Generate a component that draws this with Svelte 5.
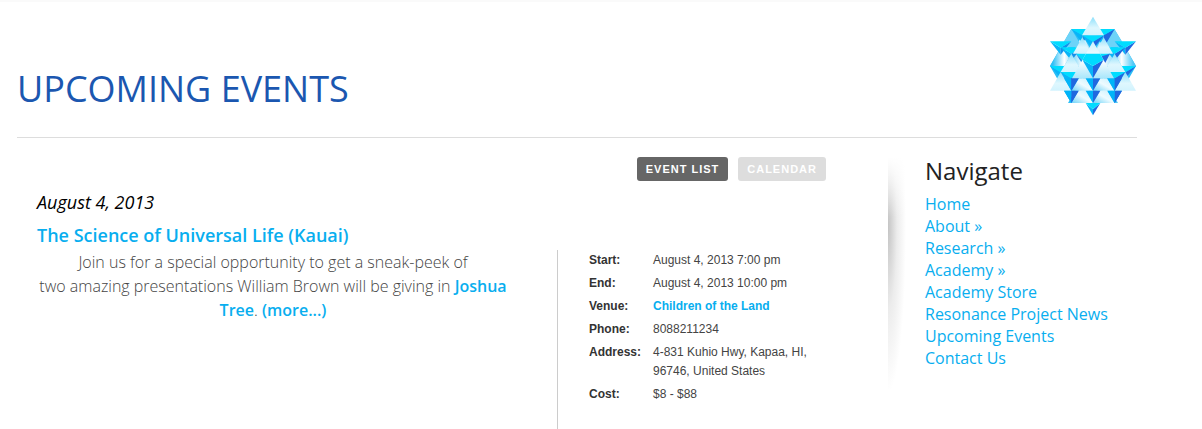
<script lang="ts">
  type Point = [number, number];

  const details = [
    { label: 'Start:', value: 'August 4, 2013 7:00 pm' },
    { label: 'End:', value: 'August 4, 2013 10:00 pm' },
    { label: 'Venue:', value: 'Children of the Land', href: '#venue' },
    { label: 'Phone:', value: '8088211234' },
    { label: 'Address:', value: '4-831 Kuhio Hwy, Kapaa, HI, 96746, United States' },
    { label: 'Cost:', value: '$8 - $88' },
  ];

  const links = [
    'Home',
    'About »',
    'Research »',
    'Academy »',
    'Academy Store',
    'Resonance Project News',
    'Upcoming Events',
    'Contact Us',
  ];

  let view = $state('list');

  // Downward tetrahedra: centre x, top y, half width, height
  const tetras = [
    [127, 63, 33, 42],
    [191, 63, 33, 56],
    [62, 100, 32, 40],
    [256, 100, 32, 40],
    [159, 82, 33, 42],
    [94, 118, 32, 40],
    [224, 118, 32, 40],
    [62, 174, 32, 37],
    [256, 174, 32, 37],
    [94, 192, 32, 56],
    [224, 192, 32, 56],
    [94, 248, 22, 37],
    [224, 248, 22, 37],
    [159, 285, 22, 37],
  ];

  // Upward faces: apex x, apex y, base y, half width
  const backFaces = [
    [73, 100, 174, 43],
    [245, 100, 174, 43],
    [127, 82, 174, 54],
    [191, 82, 174, 54],
    [127, 211, 285, 43],
    [191, 211, 285, 43],
  ];

  const frontFaces = [
    [159, 26, 82, 33],
    [127, 88, 137, 28],
    [191, 88, 137, 28],
    [94, 137, 192, 32],
    [224, 137, 192, 32],
    [62, 192, 248, 32],
    [256, 192, 248, 32],
  ];

  const join = (...p: Point[]) => p.map((q) => q.join(',')).join(' ');
  const up = ([x, top, base, w]: number[]) => join([x, top], [x + w, base], [x - w, base]);
</script>

{#snippet tetra(x: number, y: number, w: number, h: number)}
  <polygon points={join([x - w, y], [x, y + 19], [x, y + h])} fill="#08b4f8" />
  <polygon points={join([x + w, y], [x, y + 19], [x, y + h])} fill={x < 150 && y < 180 ? '#1590ea' : '#2068df'} />
  <polygon points={join([x - w, y], [x + w, y], [x, y + 19])} fill="#00dcff" />
{/snippet}

<div class="page">
  <header>
    <h1>UPCOMING EVENTS</h1>
    <svg class="logo" viewBox="28 24 262 300" aria-hidden="true">
      <defs>
        <linearGradient id="back" x1="0" y1="0" x2="1" y2="0">
          <stop offset="0.1" stop-color="#30c0f6" />
          <stop offset="0.5" stop-color="#ffffff" />
          <stop offset="0.9" stop-color="#50c8f6" />
        </linearGradient>
        <linearGradient id="front" x1="0" y1="0" x2="0" y2="1">
          <stop offset="0" stop-color="#8adffb" />
          <stop offset="0.6" stop-color="#dff7fe" />
          <stop offset="1" stop-color="#d2f3fe" />
        </linearGradient>
        <linearGradient id="lower" x1="0" y1="1" x2="1" y2="0">
          <stop offset="0" stop-color="#6fd4f8" />
          <stop offset="0.5" stop-color="#eefbff" />
          <stop offset="1" stop-color="#c8f0fd" />
        </linearGradient>
        <linearGradient id="core" x1="0" y1="0" x2="0" y2="1">
          <stop offset="0" stop-color="#c8f1fe" />
          <stop offset="0.5" stop-color="#ffffff" />
          <stop offset="1" stop-color="#a8e6fb" />
        </linearGradient>
      </defs>
      <polygon
        fill="#28bdf6"
        points="94,63 223,63 245,100 267,137 288,174 267,211 245,248 223,285 94,285 73,248 51,211 30,174 51,137 73,100"
      />
      {#each backFaces as face}
        <polygon points={up(face)} fill="url(#back)" />
      {/each}
      <polygon points="94,63 127,118 62,118" fill="#6dd3f8" />
      <polygon points="223,63 256,118 191,118" fill="#6dd3f8" />
      {#each tetras as [x, y, w, h]}
        {@render tetra(x, y, w, h)}
      {/each}
      {#each frontFaces as face}
        <polygon points={up(face)} fill="url(#front)" />
      {/each}

      <!-- lower rows -->
      {#each [127, 191] as x}
        <polygon points={join([x - 10, 211], [x + 10, 211], [x + 32, 248], [x - 32, 248])} fill="url(#lower)" />
        <polygon points={join([x - 10, 248], [x + 10, 248], [x + 32, 285], [x - 32, 285])} fill="url(#lower)" />
      {/each}
      {#each [94, 159, 224] as x}
        {#each [211, 248] as y}
          <polygon points={join([x - 22, y], [x, y], [x, y + 37])} fill="#00b4f8" />
          <polygon points={join([x, y], [x + 22, y], [x, y + 37])} fill="#2068df" />
        {/each}
      {/each}

      <!-- centre piece -->
      <polygon points="108,137 210,137 191,156 127,156" fill="#00dcff" />
      <polygon points="108,137 127,156 127,168" fill="#1590ea" />
      <polygon points="210,137 191,174 181,146" fill="#2068df" />
      <polygon points="159,100 222,211 96,211" fill="url(#core)" />
      <polygon points="138,137 180,137 191,156 127,156" fill="#00dcff" />
      {@render tetra(159, 155, 32, 56)}
    </svg>
  </header>

  <div class="columns">
    <main>
      <div class="views">
        <button class:active={view === 'list'} onclick={() => (view = 'list')}>EVENT LIST</button>
        <button class:active={view === 'calendar'} onclick={() => (view = 'calendar')}>CALENDAR</button>
      </div>
      <h4>August 4, 2013</h4>
      <article>
        <div class="entry">
          <h2><a href="#event">The Science of Universal Life (Kauai)</a></h2>
          <p>
            Join us for a special opportunity to get a sneak-peek of<br />
            two amazing presentations William Brown will be giving in
            <a href="#joshua-tree">Joshua Tree</a>. <a href="#more">(more...)</a>
          </p>
        </div>
        <table>
          <tbody>
            {#each details as item}
              <tr>
                <th scope="row">{item.label}</th>
                <td>
                  {#if item.href}
                    <a href={item.href}>{item.value}</a>
                  {:else}
                    {item.value}
                  {/if}
                </td>
              </tr>
            {/each}
          </tbody>
        </table>
      </article>
    </main>

    <aside>
      <nav aria-labelledby="nav-title">
        <h3 id="nav-title">Navigate</h3>
        <ul>
          {#each links as link}
            <li><a href="#nav">{link}</a></li>
          {/each}
        </ul>
      </nav>
    </aside>
  </div>
</div>

<style>
  :global(body) {
    margin: 0;
    background: #fff;
  }

  .page {
    padding: 0 65px 0 17px;
    border-top: 2px solid #fafafa;
    font-family: 'Open Sans', sans-serif;
    color: #444;
  }

  h1,
  h2,
  h3,
  h4,
  p,
  ul {
    margin: 0;
    padding: 0;
    font-weight: 400;
  }

  a {
    color: #08aeef;
    text-decoration: none;
  }

  header {
    display: flex;
    justify-content: space-between;
    align-items: flex-end;
    padding-top: 14px;
    border-bottom: 1px solid #ddd;
  }

  h1 {
    padding-bottom: 22px;
    font-size: 36px;
    line-height: 52px;
    color: #1b57b0;
  }

  .logo {
    width: 88px;
    height: 100px;
    padding-bottom: 21px;
  }

  .columns {
    display: flex;
    align-items: flex-start;
  }

  main {
    flex: 1;
    padding: 19px 62px 0 20px;
  }

  .views {
    display: flex;
    justify-content: flex-end;
    gap: 10px;
  }

  button {
    height: 24px;
    padding: 0 9px;
    border: 0;
    border-radius: 3px;
    background: #ddd;
    color: #fff;
    font: bold 11px 'Liberation Sans', Arial, sans-serif;
    letter-spacing: 1px;
  }

  button.active {
    background: #666;
  }

  h4 {
    padding-top: 9px;
    font-size: 18px;
    line-height: 24px;
    font-style: italic;
    color: #000;
  }

  article {
    display: flex;
    align-items: flex-start;
  }

  .entry {
    flex: 1;
    padding: 8px 48px 0 0;
  }

  h2 {
    padding-bottom: 2px;
    font-size: 18px;
    line-height: 26px;
    font-weight: 600;
  }

  p {
    font-size: 16px;
    line-height: 24px;
    font-weight: 300;
    text-align: center;
  }

  p a {
    font-weight: 600;
  }

  table {
    display: block;
    box-sizing: border-box;
    width: 269px;
    min-height: 180px;
    margin-top: 36px;
    padding: 1px 0 0 29px;
    border-left: 1px solid #ccc;
    border-spacing: 0;
    font: 12px 'Liberation Sans', Arial, sans-serif;
    line-height: 19px;
  }

  th,
  td {
    padding: 0 0 4px 2px;
    vertical-align: top;
    text-align: left;
  }

  th {
    width: 62px;
    color: #333;
  }

  td {
    width: 160px;
  }

  td a {
    font-weight: bold;
  }

  aside {
    width: 212px;
    margin-top: 19px;
    padding: 0 0 20px 37px;
    background:
      linear-gradient(#fff, transparent 60px),
      radial-gradient(ellipse 18px 165px at 0 70px, #c4c4c4, #ececec 50%, #fff 100%);
  }

  h3 {
    font-size: 24px;
    line-height: 28px;
    color: #222;
  }

  ul {
    padding-top: 8px;
    list-style: none;
    font-size: 16px;
    line-height: 22px;
  }
</style>
